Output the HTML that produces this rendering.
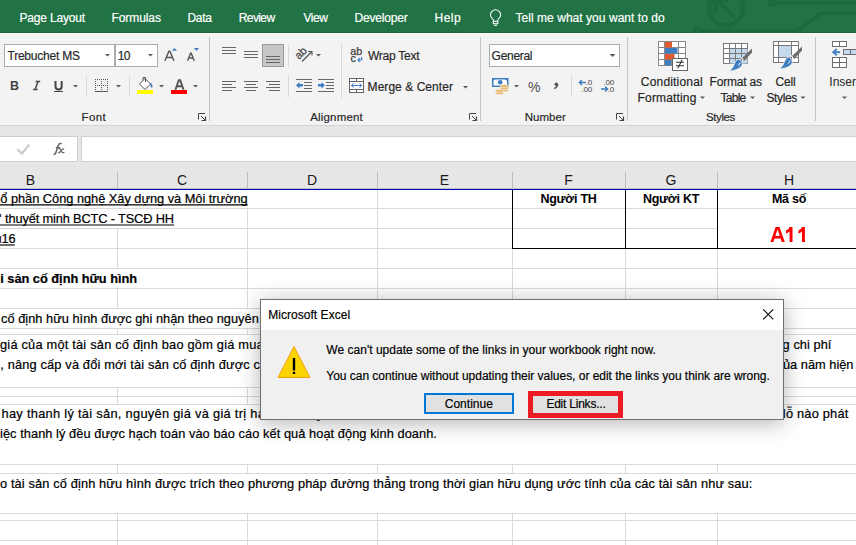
<!DOCTYPE html>
<html><head><meta charset="utf-8"><style>
html,body{margin:0;padding:0;}
body{width:856px;height:545px;overflow:hidden;position:relative;background:#fff;font-family:"Liberation Sans",sans-serif;}
.r{position:absolute;}
.t{position:absolute;white-space:nowrap;line-height:1;}
</style></head><body><div style="position:absolute;left:0;top:0;width:856px;height:545px;overflow:hidden">
<div class="r" style="left:0px;top:0px;width:856px;height:32px;background:#217346"></div>
<div class="r" style="left:0px;top:32px;width:856px;height:1px;background:#1b6339"></div>
<div class="r" style="left:0px;top:33px;width:856px;height:1px;background:#fdfdfd"></div>
<svg class="r" style="left:0;top:0" width="856" height="33" viewBox="0 0 856 33">
<g fill="none" stroke="#1c693d" stroke-width="3.6">
<circle cx="726" cy="8.5" r="17" stroke-width="4.6"/>
<path d="M719 2 L734 17" stroke-width="4.4"/>
<path d="M715.5 0 V13 M715 0 H728" stroke-width="4.4"/>
<circle cx="772" cy="3" r="2.6" stroke-width="3"/>
<path d="M775 3 H856" stroke-width="3.4"/>
<circle cx="697" cy="30.5" r="2.8" stroke-width="3"/>
<path d="M700 31 H797 L821 13 H856" stroke-width="3.4"/>
</g></svg>
<div class="t" style="left:19.4px;top:12.00px;font-size:12px;letter-spacing:-0.17px;color:#ffffff;-webkit-text-stroke:0.18px #ffffff;">Page Layout</div>
<div class="t" style="left:111.5px;top:12.00px;font-size:12px;letter-spacing:-0.086px;color:#ffffff;-webkit-text-stroke:0.18px #ffffff;">Formulas</div>
<div class="t" style="left:187.4px;top:12.00px;font-size:12px;letter-spacing:-0.233px;color:#ffffff;-webkit-text-stroke:0.18px #ffffff;">Data</div>
<div class="t" style="left:238.8px;top:12.00px;font-size:12px;letter-spacing:-0.62px;color:#ffffff;-webkit-text-stroke:0.18px #ffffff;">Review</div>
<div class="t" style="left:303.4px;top:12.00px;font-size:12px;letter-spacing:-0.433px;color:#ffffff;-webkit-text-stroke:0.18px #ffffff;">View</div>
<div class="t" style="left:354.6px;top:12.00px;font-size:12px;letter-spacing:-0.2px;color:#ffffff;-webkit-text-stroke:0.18px #ffffff;">Developer</div>
<div class="t" style="left:434.5px;top:12.00px;font-size:12px;letter-spacing:0.467px;color:#ffffff;-webkit-text-stroke:0.18px #ffffff;">Help</div>
<svg class="r" style="left:480px;top:4px" width="30" height="28" viewBox="480 4 30 28">
<path d="M493.3 21.3 V20.2 C493.3 18.6 490.4 17.6 490.4 14.9 A5.15 5.15 0 0 1 500.7 14.9 C500.7 17.6 497.8 18.6 497.8 20.2 V21.3" fill="none" stroke="#fff" stroke-width="1.05"/>
<rect x="493.3" y="21.3" width="4.5" height="2.4" fill="none" stroke="#fff" stroke-width="1.05"/>
<path d="M494 25.3 H497" stroke="#fff" stroke-width="1.05"/></svg>
<div class="t" style="left:515.5px;top:12.00px;font-size:12px;letter-spacing:0.042px;color:#ffffff;-webkit-text-stroke:0.18px #ffffff;">Tell me what you want to do</div>
<div class="r" style="left:0px;top:34px;width:856px;height:91px;background:#f3f3f3"></div>
<div class="r" style="left:0px;top:125px;width:856px;height:1px;background:#d5d5d5"></div>
<div class="r" style="left:209px;top:37px;width:1px;height:84px;background:#c4c4c4"></div>
<div class="r" style="left:480px;top:37px;width:1px;height:84px;background:#c4c4c4"></div>
<div class="r" style="left:627px;top:37px;width:1px;height:84px;background:#c4c4c4"></div>
<div class="r" style="left:815px;top:37px;width:1px;height:84px;background:#c4c4c4"></div>
<div class="r" style="left:86px;top:76px;width:1px;height:21px;background:#d8d8d8"></div>
<div class="r" style="left:129px;top:76px;width:1px;height:21px;background:#d8d8d8"></div>
<div class="r" style="left:288px;top:45px;width:1px;height:22px;background:#d8d8d8"></div>
<div class="r" style="left:288px;top:76px;width:1px;height:21px;background:#d8d8d8"></div>
<div class="r" style="left:341px;top:43px;width:1px;height:55px;background:#d8d8d8"></div>
<div class="r" style="left:571px;top:76px;width:1px;height:21px;background:#d8d8d8"></div>
<div class="t" style="left:81.5px;top:112.00px;font-size:11.5px;letter-spacing:0.4px;color:#262626;-webkit-text-stroke:0.18px #262626;">Font</div>
<div class="t" style="left:310.2px;top:112.00px;font-size:11.5px;letter-spacing:0.175px;color:#262626;-webkit-text-stroke:0.18px #262626;">Alignment</div>
<div class="t" style="left:524.7px;top:112.00px;font-size:11.5px;letter-spacing:0.04px;color:#262626;-webkit-text-stroke:0.18px #262626;">Number</div>
<div class="t" style="left:706.0px;top:112.00px;font-size:11.5px;letter-spacing:-0.4px;color:#262626;-webkit-text-stroke:0.18px #262626;">Styles</div>
<div class="r" style="left:4px;top:44px;width:111px;height:23px;background:#fff;border:1px solid #ababab;box-sizing:border-box"></div>
<div class="r" style="left:115px;top:44px;width:43px;height:23px;background:#fff;border:1px solid #ababab;box-sizing:border-box"></div>
<div class="t" style="left:7.5px;top:50.00px;font-size:12px;letter-spacing:-0.227px;color:#262626;-webkit-text-stroke:0.18px #262626;">Trebuchet MS</div>
<div class="t" style="left:117.75px;top:50.00px;font-size:12px;letter-spacing:-0.75px;color:#262626;-webkit-text-stroke:0.18px #262626;">10</div>
<div class="r" style="left:489px;top:44px;width:131px;height:23px;background:#fff;border:1px solid #ababab;box-sizing:border-box"></div>
<div class="t" style="left:491.6px;top:50.00px;font-size:12px;letter-spacing:-0.3px;color:#262626;-webkit-text-stroke:0.18px #262626;">General</div>
<svg class="r" style="left:0;top:0" width="856" height="125" viewBox="0 0 856 125"><path d="M105 54 H110 L107.5 56.5 Z" fill="#5a5a5a"/><path d="M148 54 H153 L150.5 56.5 Z" fill="#5a5a5a"/><path d="M164.9 60.8 L168.9 51.3 H169.9 L173.9 60.8 M166.3 57.4 H172.5" fill="none" stroke="#555" stroke-width="1.45"/><path d="M172 50.8 L174.5 48 L177 50.8 Z" fill="#3f7dc1"/><path d="M187.6 60.8 L190.6 53.2 H191.2 L194.2 60.8 M188.8 58 H193" fill="none" stroke="#555" stroke-width="1.4"/><path d="M194 48 L199 48 L196.5 51 Z" fill="#3f7dc1"/><text x="10" y="90" font-family="Liberation Sans" font-weight="bold" font-size="12.5" fill="#444">B</text><path d="M35.6 81.6 H40.2 M33 89.6 H37.6 M38 81.6 L35.2 89.6" fill="none" stroke="#4a4a4a" stroke-width="1.5"/><path d="M55.5 81 V86.3 Q55.5 89.6 58.6 89.6 Q61.7 89.6 61.7 86.3 V81" fill="none" stroke="#444" stroke-width="2"/><path d="M54 91.5 H63" stroke="#444" stroke-width="1"/><path d="M73 85 H78 L75.5 87.5 Z" fill="#5a5a5a"/><g fill="#555"><rect x="95" y="79" width="1" height="1"/><rect x="95" y="81" width="1" height="1"/><rect x="95" y="83" width="1" height="1"/><rect x="95" y="85" width="1" height="1"/><rect x="95" y="87" width="1" height="1"/><rect x="95" y="89" width="1" height="1"/><rect x="97" y="79" width="1" height="1"/><rect x="97" y="85" width="1" height="1"/><rect x="99" y="79" width="1" height="1"/><rect x="99" y="85" width="1" height="1"/><rect x="101" y="79" width="1" height="1"/><rect x="101" y="81" width="1" height="1"/><rect x="101" y="83" width="1" height="1"/><rect x="101" y="85" width="1" height="1"/><rect x="101" y="87" width="1" height="1"/><rect x="101" y="89" width="1" height="1"/><rect x="103" y="79" width="1" height="1"/><rect x="103" y="85" width="1" height="1"/><rect x="105" y="79" width="1" height="1"/><rect x="105" y="85" width="1" height="1"/><rect x="107" y="79" width="1" height="1"/><rect x="107" y="81" width="1" height="1"/><rect x="107" y="83" width="1" height="1"/><rect x="107" y="85" width="1" height="1"/><rect x="107" y="87" width="1" height="1"/><rect x="107" y="89" width="1" height="1"/></g><path d="M95 91.5 H108" stroke="#555" stroke-width="1"/><path d="M116 85 H121 L118.5 87.5 Z" fill="#5a5a5a"/><path d="M139.5 84 L145 78.5 L150.5 84 L145 89.5 Z" fill="#fff" stroke="#555" stroke-width="1"/><path d="M143 80.5 V77.5 H145.5 V82" fill="none" stroke="#555" stroke-width="1"/><path d="M150.5 82.5 Q153.5 84.5 152 88.5 L150.5 86 Z" fill="#3f7dc1"/><rect x="137" y="90" width="16" height="4" fill="#ffff00"/><path d="M159 85 H164 L161.5 87.5 Z" fill="#5a5a5a"/><path d="M175.4 89.8 L178.8 80.2 H180.2 L183.6 89.8 M176.8 86.2 H182.2" fill="none" stroke="#555" stroke-width="1.9"/><rect x="171" y="90" width="16" height="4" fill="#ff0000"/><path d="M193 85 H198 L195.5 87.5 Z" fill="#5a5a5a"/><path d="M198.5 119.5 V113.5 H205" fill="none" stroke="#444" stroke-width="1"/><path d="M201 116 L205 120" stroke="#444" stroke-width="1"/><path d="M205.5 116.5 V120.5 H201.5" fill="none" stroke="#444" stroke-width="1.2"/><path d="M222 47.5 H236" stroke="#666" stroke-width="1"/><path d="M222 50.5 H236" stroke="#666" stroke-width="1"/><path d="M222 53.5 H236" stroke="#666" stroke-width="1"/><path d="M244 51.5 H258" stroke="#666" stroke-width="1"/><path d="M244 54.5 H258" stroke="#666" stroke-width="1"/><path d="M244 57.5 H258" stroke="#666" stroke-width="1"/><rect x="262.5" y="44.5" width="21" height="22" fill="#c6c6c6" stroke="#999" stroke-width="1"/><path d="M266 56.5 H280" stroke="#666" stroke-width="1"/><path d="M266 59.5 H280" stroke="#666" stroke-width="1"/><path d="M266 62.5 H280" stroke="#666" stroke-width="1"/><path d="M222 81.5 H236" stroke="#666" stroke-width="1"/><path d="M244 81.5 H258" stroke="#666" stroke-width="1"/><path d="M266 81.5 H280" stroke="#666" stroke-width="1"/><path d="M222 84.5 H232" stroke="#666" stroke-width="1"/><path d="M246 84.5 H256" stroke="#666" stroke-width="1"/><path d="M269 84.5 H280" stroke="#666" stroke-width="1"/><path d="M222 87.5 H236" stroke="#666" stroke-width="1"/><path d="M244 87.5 H258" stroke="#666" stroke-width="1"/><path d="M266 87.5 H280" stroke="#666" stroke-width="1"/><path d="M222 90.5 H232" stroke="#666" stroke-width="1"/><path d="M246 90.5 H256" stroke="#666" stroke-width="1"/><path d="M269 90.5 H280" stroke="#666" stroke-width="1"/><text x="0" y="0" transform="translate(299 60) rotate(-45)" font-family="Liberation Sans" font-size="11" fill="#444" stroke="#444" stroke-width="0.25">ab</text><path d="M302 61.5 L311.5 52" stroke="#555" stroke-width="1.2"/><path d="M308 51.5 H312 V55.5" fill="none" stroke="#555" stroke-width="1.1"/><path d="M316 54 H321 L318.5 56.5 Z" fill="#5a5a5a"/><path d="M296 79.5 H312" stroke="#666" stroke-width="1"/><path d="M296 91.5 H312" stroke="#666" stroke-width="1"/><path d="M304 82.5 H312" stroke="#666" stroke-width="1"/><path d="M304 85.5 H312" stroke="#666" stroke-width="1"/><path d="M304 88.5 H312" stroke="#666" stroke-width="1"/><path d="M296 85.2 L299.5 82 V84 H303 V86.5 H299.5 V88.5 Z" fill="#3f7dc1"/><path d="M318 79.5 H334" stroke="#666" stroke-width="1"/><path d="M318 91.5 H334" stroke="#666" stroke-width="1"/><path d="M326 82.5 H334" stroke="#666" stroke-width="1"/><path d="M326 85.5 H334" stroke="#666" stroke-width="1"/><path d="M326 88.5 H334" stroke="#666" stroke-width="1"/><path d="M325 85.2 L321.5 82 V84 H318 V86.5 H321.5 V88.5 Z" fill="#3f7dc1"/><text x="350.3" y="54.8" font-family="Liberation Sans" font-size="10.8" fill="#3c3c3c" stroke="#3c3c3c" stroke-width="0.25">ab</text><text x="350.6" y="61.8" font-family="Liberation Sans" font-size="10.8" fill="#3c3c3c" stroke="#3c3c3c" stroke-width="0.25">c</text><path d="M361.6 57 V60 H358 M359.8 58.2 L358 60 L359.8 61.8" fill="none" stroke="#3f7dc1" stroke-width="1.2"/><rect x="349.5" y="78.5" width="14" height="14" fill="#fff" stroke="#666" stroke-width="1"/><path d="M349.5 81.5 H363.5" stroke="#666" stroke-width="1"/><path d="M349.5 89.5 H363.5" stroke="#666" stroke-width="1"/><path d="M356.5 78.5 V81.5 M356.5 89.5 V92.5" stroke="#666" stroke-width="1"/><path d="M351.5 85.5 H361.5" stroke="#3f7dc1" stroke-width="1"/><path d="M353.5 83.5 L351.2 85.5 L353.5 87.5 M359.5 83.5 L361.8 85.5 L359.5 87.5" fill="none" stroke="#3f7dc1" stroke-width="1"/><path d="M463 86 H468 L465.5 88.5 Z" fill="#5a5a5a"/><path d="M469.5 119.5 V113.5 H476" fill="none" stroke="#444" stroke-width="1"/><path d="M472 116 L476 120" stroke="#444" stroke-width="1"/><path d="M476.5 116.5 V120.5 H472.5" fill="none" stroke="#444" stroke-width="1.2"/><path d="M609.5 54 H615.5 L612.5 57.0 Z" fill="#5a5a5a"/><rect x="492.75" y="78.75" width="15" height="7.5" fill="#fff" stroke="#3f7dc1" stroke-width="1.5"/><path d="M492 78 H496 L492 82 Z M508 78 H504 L508 82 Z" fill="#3f7dc1"/><circle cx="500.2" cy="82.3" r="2.3" fill="#3f7dc1"/><g fill="#e8b66a" stroke="#f3f3f3" stroke-width="0.6"><ellipse cx="504.3" cy="90.3" rx="4.2" ry="1.5"/><ellipse cx="504.3" cy="88.1" rx="4.2" ry="1.5"/><ellipse cx="504.3" cy="85.9" rx="4.2" ry="1.5"/><ellipse cx="499.6" cy="93.0" rx="4.2" ry="1.5"/><ellipse cx="499.6" cy="90.8" rx="4.2" ry="1.5"/></g><path d="M514 85 H519 L516.5 87.5 Z" fill="#5a5a5a"/><text x="528" y="92" font-family="Liberation Sans" font-size="14" fill="#505050">%</text><circle cx="556.3" cy="84.2" r="1.75" fill="#505050"/><path d="M557.6 84.6 Q557.6 87.2 554.2 88.6" fill="none" stroke="#505050" stroke-width="1.3"/><path d="M579 82.5 H586 M582 80 L579.3 82.5 L582 85" fill="none" stroke="#3f7dc1" stroke-width="1.3"/><text x="585.5" y="85" font-family="Liberation Sans" font-size="8" fill="#444">.0</text><text x="581.2" y="92" font-family="Liberation Sans" font-size="8" fill="#444">.00</text><text x="603.2" y="85" font-family="Liberation Sans" font-size="8" fill="#444">.00</text><path d="M601 89 H608 M605 86.5 L607.7 89 L605 91.5" fill="none" stroke="#3f7dc1" stroke-width="1.3"/><text x="607.5" y="92" font-family="Liberation Sans" font-size="8" fill="#444">.0</text><path d="M616.5 119.5 V113.5 H623" fill="none" stroke="#444" stroke-width="1"/><path d="M619 116 L623 120" stroke="#444" stroke-width="1"/><path d="M623.5 116.5 V120.5 H619.5" fill="none" stroke="#444" stroke-width="1.2"/><rect x="658.5" y="41.5" width="27" height="24" fill="#fff" stroke="#8a8a8a" stroke-width="1"/><path d="M664.5 41.5 V65.5" stroke="#8a8a8a" stroke-width="1"/><path d="M671.5 41.5 V65.5" stroke="#8a8a8a" stroke-width="1"/><path d="M678.5 41.5 V65.5" stroke="#8a8a8a" stroke-width="1"/><path d="M658.5 47.5 H685.5" stroke="#8a8a8a" stroke-width="1"/><path d="M658.5 53.5 H685.5" stroke="#8a8a8a" stroke-width="1"/><path d="M658.5 59.5 H685.5" stroke="#8a8a8a" stroke-width="1"/><rect x="665" y="42" width="7" height="5.5" fill="#e0592f"/><rect x="665" y="48" width="12.5" height="5.5" fill="#3f7dc1"/><rect x="665" y="54" width="9.5" height="5.5" fill="#e0592f"/><rect x="665" y="60" width="6" height="5.5" fill="#3f7dc1"/><rect x="672.5" y="58.5" width="15" height="12" fill="#fff" stroke="#666" stroke-width="1"/><path d="M676 62.3 H684 M676 65.8 H684 M682.2 59.8 L677.8 68.2" fill="none" stroke="#333" stroke-width="1.1"/><rect x="723.5" y="43.5" width="24" height="20" fill="#fff" stroke="#7a7a7a" stroke-width="1"/><rect x="729.5" y="48.5" width="18" height="15" fill="#c5d9ee"/><path d="M729.5 43.5 V63.5" stroke="#7a7a7a" stroke-width="1"/><path d="M735.5 43.5 V63.5" stroke="#7a7a7a" stroke-width="1"/><path d="M741.5 43.5 V63.5" stroke="#7a7a7a" stroke-width="1"/><path d="M723.5 48.5 H747.5" stroke="#7a7a7a" stroke-width="1"/><path d="M723.5 53.5 H747.5" stroke="#7a7a7a" stroke-width="1"/><path d="M723.5 58.5 H747.5" stroke="#7a7a7a" stroke-width="1"/><path d="M741.5 58.5 L752 48.6 V52.5 L744.2 61 Z" fill="#6e6e6e"/><path d="M740.6 57.2 L743.2 59.8" stroke="#f3f3f3" stroke-width="1.2"/><path d="M738.6 59.2 Q742.8 60.6 742.2 65 Q740.6 69.6 729.6 71.2 Q733.6 67.2 734.6 63.4 Q735.8 59.4 738.6 59.2 Z" fill="#3f7dc1" stroke="#f3f3f3" stroke-width="0.8"/><path d="M738 65.5 Q739.6 64.6 740.2 62.6" fill="none" stroke="#fff" stroke-width="1"/><rect x="773.5" y="41.5" width="25" height="21" fill="#fff" stroke="#7a7a7a" stroke-width="1"/><rect x="778.5" y="45.5" width="13" height="12" fill="#c5d9ee"/><path d="M778.5 41.5 V62.5 M791.5 41.5 V62.5 M773.5 45.5 H798.5 M773.5 57.5 H798.5" stroke="#7a7a7a" stroke-width="1"/><path d="M791.5 56.5 L802 46.6 V50.5 L794.2 59 Z" fill="#6e6e6e"/><path d="M790.6 55.2 L793.2 57.8" stroke="#f3f3f3" stroke-width="1.2"/><path d="M788.6 57.2 Q792.8 58.6 792.2 63 Q790.6 67.6 779.6 69.2 Q783.6 65.2 784.6 61.4 Q785.8 57.4 788.6 57.2 Z" fill="#3f7dc1" stroke="#f3f3f3" stroke-width="0.8"/><path d="M788 63.5 Q789.6 62.6 790.2 60.6" fill="none" stroke="#fff" stroke-width="1"/><path d="M700 96.5 H705 L702.5 99.0 Z" fill="#5a5a5a"/><path d="M750 96.5 H755 L752.5 99.0 Z" fill="#5a5a5a"/><path d="M800.5 96.5 H805.5 L803.0 99.0 Z" fill="#5a5a5a"/><rect x="832.5" y="41.5" width="14" height="5" fill="#fff" stroke="#6e6e6e" stroke-width="1"/><path d="M839.5 41.5 V46.5" stroke="#6e6e6e"/><rect x="843.5" y="49.5" width="16" height="5" fill="#c5d9ee" stroke="#6e6e6e" stroke-width="1"/><path d="M850.5 49.5 V54.5" stroke="#6e6e6e"/><path d="M834 52.2 H840.2" stroke="#3f7dc1" stroke-width="2"/><path d="M836.8 49 L833.2 52.2 L836.8 55.4" fill="none" stroke="#3f7dc1" stroke-width="1.8"/><rect x="832.5" y="57.5" width="14" height="10" fill="#fff" stroke="#6e6e6e" stroke-width="1"/><path d="M839.5 57.5 V67.5 M832.5 62.5 H846.5" stroke="#6e6e6e"/><path d="M842 96.5 H847 L844.5 99.0 Z" fill="#5a5a5a"/></svg>
<div class="t" style="left:640.8px;top:76.00px;font-size:12px;letter-spacing:0.19px;color:#262626;-webkit-text-stroke:0.18px #262626;">Conditional</div>
<div class="t" style="left:637.6px;top:92.00px;font-size:12px;letter-spacing:0.156px;color:#262626;-webkit-text-stroke:0.18px #262626;">Formatting</div>
<div class="t" style="left:709.6px;top:76.00px;font-size:12px;letter-spacing:-0.2px;color:#262626;-webkit-text-stroke:0.18px #262626;">Format as</div>
<div class="t" style="left:720.4px;top:92.00px;font-size:12px;letter-spacing:-0.7px;color:#262626;-webkit-text-stroke:0.18px #262626;">Table</div>
<div class="t" style="left:775.5px;top:76.00px;font-size:12px;letter-spacing:-0.133px;color:#262626;-webkit-text-stroke:0.18px #262626;">Cell</div>
<div class="t" style="left:766.4px;top:92.00px;font-size:12px;letter-spacing:-0.36px;color:#262626;-webkit-text-stroke:0.18px #262626;">Styles</div>
<div class="t " style="left:829.3px;top:76.00px;font-size:12px;color:#262626;">Insert</div>
<div class="t" style="left:368.0px;top:50.00px;font-size:12px;letter-spacing:-0.25px;color:#262626;-webkit-text-stroke:0.18px #262626;">Wrap Text</div>
<div class="t" style="left:367.6px;top:81.00px;font-size:12px;letter-spacing:0.046px;color:#262626;-webkit-text-stroke:0.18px #262626;">Merge &amp; Center</div>
<div class="r" style="left:0px;top:126px;width:856px;height:63px;background:#e6e6e6"></div>
<div class="r" style="left:0px;top:136px;width:78px;height:26px;background:#fff;border:1px solid #cfcfcf;border-left:none;box-sizing:border-box"></div>
<svg class="r" style="left:0;top:136px" width="78" height="26" viewBox="0 136 78 26"><path d="M17.4 149.3 L21.9 153.6 L29.2 144.6" fill="none" stroke="#c9c9c9" stroke-width="2.2"/><path d="M53.6 154.4 Q55.6 154.6 56.4 151 L58.2 145.5 Q59 143.2 61.8 143.6" fill="none" stroke="#666" stroke-width="1.5"/><path d="M55.8 147.6 H60.2" stroke="#666" stroke-width="1.3"/><path d="M58.6 148.8 Q60.2 148.2 61 150.2 L61.6 151.8 Q62.4 153.2 64.4 152.2 M64.2 148.6 Q63 148.4 61.2 150.6 L60 152 Q59 153.2 58.2 152.6" fill="none" stroke="#666" stroke-width="1.25"/></svg>
<div class="r" style="left:81px;top:136px;width:775px;height:26px;background:#fff;border:1px solid #d0d0d0;border-right:none;box-sizing:border-box"></div>
<div class="r" style="left:117px;top:172px;width:1px;height:17px;background:#bdbdbd"></div>
<div class="r" style="left:247px;top:172px;width:1px;height:17px;background:#bdbdbd"></div>
<div class="r" style="left:377px;top:172px;width:1px;height:17px;background:#bdbdbd"></div>
<div class="r" style="left:512px;top:172px;width:1px;height:17px;background:#bdbdbd"></div>
<div class="r" style="left:625px;top:172px;width:1px;height:17px;background:#bdbdbd"></div>
<div class="r" style="left:717px;top:172px;width:1px;height:17px;background:#bdbdbd"></div>
<div class="t" style="left:10.5px;top:173px;width:40px;text-align:center;font-size:14px;color:#1a1a1a">B</div>
<div class="t" style="left:162px;top:173px;width:40px;text-align:center;font-size:14px;color:#1a1a1a">C</div>
<div class="t" style="left:292px;top:173px;width:40px;text-align:center;font-size:14px;color:#1a1a1a">D</div>
<div class="t" style="left:424.5px;top:173px;width:40px;text-align:center;font-size:14px;color:#1a1a1a">E</div>
<div class="t" style="left:548.5px;top:173px;width:40px;text-align:center;font-size:14px;color:#1a1a1a">F</div>
<div class="t" style="left:651px;top:173px;width:40px;text-align:center;font-size:14px;color:#1a1a1a">G</div>
<div class="t" style="left:769px;top:173px;width:40px;text-align:center;font-size:14px;color:#1a1a1a">H</div>
<div class="r" style="left:0px;top:188px;width:856px;height:1px;background:#c4c4bc"></div>
<div class="r" style="left:0px;top:189px;width:856px;height:1px;background:#0000c4"></div>
<div class="r" style="left:0px;top:190px;width:856px;height:1px;background:#9a9ae0"></div>
<div class="r" style="left:0px;top:190px;width:856px;height:355px;background:#fff"></div>
<svg class="r" style="left:0;top:0" width="856" height="545" viewBox="0 0 856 545"><g stroke="#d9d9d9" stroke-width="1" shape-rendering="crispEdges"><path d="M0 208.5 H856"/><path d="M0 228.5 H717"/><path d="M0 248.5 H856"/><path d="M0 268.5 H856"/><path d="M0 288.5 H856"/><path d="M0 308.5 H856"/><path d="M0 328.5 H856"/><path d="M0 334.5 H856"/><path d="M0 387.5 H856"/><path d="M0 396.5 H856"/><path d="M0 404.5 H856"/><path d="M0 464.5 H856"/><path d="M0 473.5 H856"/><path d="M0 513.5 H856"/><path d="M0 520.5 H856"/><path d="M0 540.5 H856"/><path d="M377.5 190 V208"/><path d="M247.5 208 V228"/><path d="M377.5 208 V228"/><path d="M117.5 228 V248"/><path d="M247.5 228 V248"/><path d="M377.5 228 V248"/><path d="M512.5 228 V248"/><path d="M625.5 228 V248"/><path d="M717.5 228 V248"/><path d="M117.5 248 V268"/><path d="M247.5 248 V268"/><path d="M377.5 248 V268"/><path d="M512.5 248 V268"/><path d="M625.5 248 V268"/><path d="M717.5 248 V268"/><path d="M247.5 268 V288"/><path d="M377.5 268 V288"/><path d="M512.5 268 V288"/><path d="M625.5 268 V288"/><path d="M717.5 268 V288"/><path d="M117.5 288 V308"/><path d="M247.5 288 V308"/><path d="M377.5 288 V308"/><path d="M512.5 288 V308"/><path d="M625.5 288 V308"/><path d="M717.5 288 V308"/><path d="M117.5 328 V334"/><path d="M247.5 328 V334"/><path d="M377.5 328 V334"/><path d="M512.5 328 V334"/><path d="M625.5 328 V334"/><path d="M717.5 328 V334"/><path d="M117.5 387 V396"/><path d="M247.5 387 V396"/><path d="M377.5 387 V396"/><path d="M512.5 387 V396"/><path d="M625.5 387 V396"/><path d="M717.5 387 V396"/><path d="M117.5 396 V404"/><path d="M247.5 396 V404"/><path d="M377.5 396 V404"/><path d="M512.5 396 V404"/><path d="M625.5 396 V404"/><path d="M717.5 396 V404"/><path d="M117.5 464 V473"/><path d="M247.5 464 V473"/><path d="M377.5 464 V473"/><path d="M512.5 464 V473"/><path d="M625.5 464 V473"/><path d="M717.5 464 V473"/><path d="M117.5 513 V520"/><path d="M247.5 513 V520"/><path d="M377.5 513 V520"/><path d="M512.5 513 V520"/><path d="M625.5 513 V520"/><path d="M717.5 513 V520"/><path d="M117.5 520 V540"/><path d="M247.5 520 V540"/><path d="M377.5 520 V540"/><path d="M512.5 520 V540"/><path d="M625.5 520 V540"/><path d="M717.5 520 V540"/><path d="M117.5 540 V545"/><path d="M247.5 540 V545"/><path d="M377.5 540 V545"/><path d="M512.5 540 V545"/><path d="M625.5 540 V545"/><path d="M717.5 540 V545"/></g><g stroke="#000" stroke-width="1" shape-rendering="crispEdges" fill="none"><path d="M512.5 190 V249"/><path d="M625.5 190 V249"/><path d="M717.5 190 V249"/><path d="M512 248.5 H856"/></g></svg>
<div class="t " style="left:0.3px;top:193.00px;font-size:12.8px;color:#000;letter-spacing:-0.021px;-webkit-text-stroke:0.2px #000;">ổ phần Công nghệ Xây dựng và Môi trường</div>
<div class="t " style="left:5.1px;top:213.00px;font-size:12.8px;color:#000;letter-spacing:-0.145px;-webkit-text-stroke:0.2px #000;">thuyết minh BCTC - TSCĐ HH</div>
<div class="t " style="left:1.5px;top:233.00px;font-size:12.8px;color:#000;-webkit-text-stroke:0.2px #000;">16</div>
<svg class="r" style="left:0;top:190px" width="260" height="60" viewBox="0 190 260 60"><g stroke="#000" stroke-width="1.15"><path d="M0 204.9 H247.7"/><path d="M0 225 H174"/><path d="M0 245 H14.8"/></g><rect x="0" y="214" width="1.2" height="3" fill="#3a3a6a"/><rect x="0" y="236" width="1.2" height="7" fill="#3a3a6a"/></svg>
<div class="t " style="left:0.2px;top:273.00px;font-size:12.8px;color:#000;font-weight:bold;letter-spacing:-0.011px;-webkit-text-stroke:0.2px #000;">i sản cố định hữu hình</div>
<div class="t " style="left:1.0px;top:313.00px;font-size:12.8px;color:#000;letter-spacing:0.024px;-webkit-text-stroke:0.2px #000;">cố định hữu hình được ghi nhận theo nguyên giá. Nguyên giá tài sản</div>
<div class="t " style="left:0.0px;top:339.00px;font-size:12.8px;color:#000;letter-spacing:0.213px;-webkit-text-stroke:0.2px #000;">giá của một tài sản cố định bao gồm giá mua và những chi phí</div>
<div class="t " style="left:0.3px;top:359.00px;font-size:12.8px;color:#000;letter-spacing:0.156px;-webkit-text-stroke:0.2px #000;">, nâng cấp và đổi mới tài sản cố định được cộng tăng nguyên</div>
<div class="t " style="left:1.5px;top:408.00px;font-size:12.8px;color:#000;letter-spacing:0.303px;-webkit-text-stroke:0.2px #000;">hay thanh lý tài sản, nguyên giá và giá trị hao mòn lũy kế</div>
<div class="t " style="left:0.0px;top:428.00px;font-size:12.8px;color:#000;letter-spacing:0.062px;-webkit-text-stroke:0.2px #000;">iệc thanh lý đều được hạch toán vào báo cáo kết quả hoạt động kinh doanh.</div>
<div class="t " style="left:0.0px;top:478.00px;font-size:12.8px;color:#000;letter-spacing:0.128px;-webkit-text-stroke:0.2px #000;">o tài sản cố định hữu hình được trích theo phương pháp đường thẳng trong thời gian hữu dụng ước tính của các tài sản như sau:</div>
<div class="t " style="left:782.6px;top:339.00px;font-size:12.8px;color:#000;letter-spacing:0.057px;-webkit-text-stroke:0.2px #000;">g chi phí</div>
<div class="t " style="left:782.98px;top:359.00px;font-size:12.8px;color:#000;letter-spacing:0.007px;-webkit-text-stroke:0.2px #000;">ủa năm hiện</div>
<div class="t " style="left:782.86px;top:408.00px;font-size:12.8px;color:#000;letter-spacing:0.209px;-webkit-text-stroke:0.2px #000;">lỗ nào phát</div>
<div class="t" style="left:518.5px;top:193px;width:100px;text-align:center;font-size:12.5px;letter-spacing:-0.25px;font-weight:bold;color:#000">Người TH</div>
<div class="t" style="left:621px;top:193px;width:100px;text-align:center;font-size:12.5px;letter-spacing:-0.25px;font-weight:bold;color:#000">Người KT</div>
<div class="t" style="left:739px;top:193px;width:100px;text-align:center;font-size:12.5px;letter-spacing:-0.25px;font-weight:bold;color:#000">Mã số</div>
<svg class="r" style="left:760px;top:220px" width="60" height="30" viewBox="760 220 60 30"><path fill-rule="evenodd" fill="#ff0000" d="M775.6 227 H779.5 L784.8 242 H781.8 L780.6 238.6 H774.5 L773.3 242 H770.5 Z M775.3 235.9 H779.8 L777.55 229.4 Z"/><path d="M789.6 227 H792.5 V242 H789.6 V231.3 Q788.8 232.6 786 233.4 V230.6 Q789 229.3 789.6 227 Z" fill="#ff0000"/><path d="M802.0 227 H804.9 V242 H802.0 V231.3 Q801.2 232.6 798.4 233.4 V230.6 Q801.4 229.3 802.0 227 Z" fill="#ff0000"/></svg>
<div class="r" style="left:260px;top:299px;width:524px;height:121px;box-shadow:0 3px 20px rgba(0,0,0,0.30);background:#f0f0f0"></div>
<div class="r" style="left:260px;top:299px;width:524px;height:121px;border:1px solid #6f6f6f;box-sizing:border-box;background:#f0f0f0"></div>
<div class="r" style="left:261px;top:300px;width:522px;height:30px;background:#fff"></div>
<div class="t" style="left:268.3px;top:309.00px;font-size:12px;letter-spacing:0.029px;color:#000;-webkit-text-stroke:0.18px #000;">Microsoft Excel</div>
<svg class="r" style="left:760px;top:307px" width="16" height="16" viewBox="0 0 16 16"><path d="M3.2 2.3 L13.2 12.3 M13.2 2.3 L3.2 12.3" stroke="#000" stroke-width="1.05"/></svg>
<svg class="r" style="left:276px;top:344px" width="36" height="36" viewBox="276 344 36 36"><path d="M294 346.5 L310 377.5 H278 Z" fill="#fcd500" stroke="#f2a20c" stroke-width="1" stroke-linejoin="round"/><rect x="292.8" y="358" width="2.4" height="12.5" fill="#000"/><rect x="292.8" y="371.8" width="2.4" height="2.2" fill="#000"/></svg>
<div class="t" style="left:326.3px;top:344.00px;font-size:12px;letter-spacing:0.02px;color:#000;-webkit-text-stroke:0.18px #000;">We can't update some of the links in your workbook right now.</div>
<div class="t" style="left:326.3px;top:370.00px;font-size:12px;letter-spacing:-0.027px;color:#000;-webkit-text-stroke:0.18px #000;">You can continue without updating their values, or edit the links you think are wrong.</div>
<div class="r" style="left:424px;top:393px;width:90px;height:21px;border:2px solid #0078d7;box-sizing:border-box;background:#e1e1e1"></div>
<div class="t" style="left:444.7px;top:398.00px;font-size:12px;letter-spacing:0.029px;color:#000;-webkit-text-stroke:0.18px #000;">Continue</div>
<div class="r" style="left:528px;top:391px;width:95px;height:27px;border:5px solid #ed1c24;box-sizing:border-box;background:#e1e1e1"></div>
<div class="t" style="left:546.4px;top:398.00px;font-size:12px;letter-spacing:-0.225px;color:#000;-webkit-text-stroke:0.18px #000;">Edit Links...</div>
</div>
</body></html>
